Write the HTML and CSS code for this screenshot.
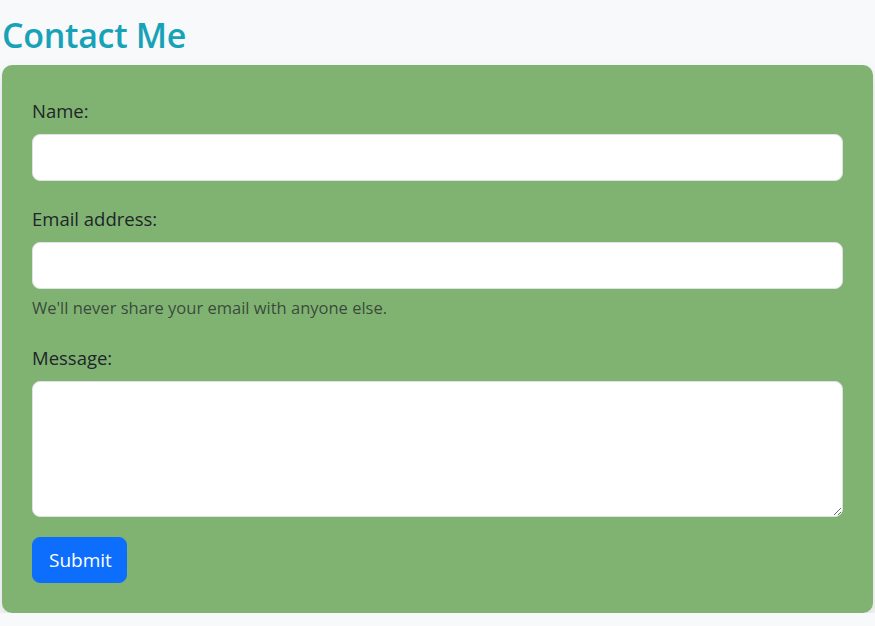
FILE: index.html
```html
<!DOCTYPE html>
<html lang="en">
<head>
<meta charset="utf-8">
<title>Contact Me</title>
<link rel="stylesheet" href="styles.css">
</head>
<body>
<main class="page">
  <h1 class="title">Contact Me</h1>
  <form class="card">
    <div class="field">
      <label class="label" for="name">Name:</label>
      <input class="control" type="text" id="name">
    </div>
    <div class="field">
      <label class="label" for="email">Email address:</label>
      <input class="control" type="email" id="email">
      <div class="help">We'll never share your email with anyone else.</div>
    </div>
    <div class="field">
      <label class="label" for="message">Message:</label>
      <textarea class="control area" id="message"></textarea>
    </div>
    <div class="actions">
      <button class="btn" type="button">Submit</button>
    </div>
  </form>
</main>
</body>
</html>
```

FILE: styles.css
```css
* { box-sizing: border-box; }
html, body { margin: 0; padding: 0; }
body {
  background: #f8f9fa;
  font-family: "Open Sans", "Noto Sans", sans-serif;
  color: #212529;
  font-size: 18px;
}
.page {
  padding: 14px 2px 0 2px;
}
.title {
  margin: 0 0 9px 0;
  font-size: 34px;
  line-height: 42px;
  font-weight: 600;
  color: #17a2b8;
  letter-spacing: -0.3px;
}
.card {
  display: flex;
  flex-direction: column;
  background: #80b372;
  border-radius: 10px;
  padding: 30px;
  box-shadow: 0 8px 16px rgba(0,0,0,0.12);
}
.field {
  display: flex;
  flex-direction: column;
  margin-bottom: 22px;
}
.label {
  font-size: 18.5px;
  line-height: 27px;
  padding-top: 2px;
  margin-bottom: 10px;
  color: #212529;
}
.control {
  display: block;
  width: 100%;
  height: 47px;
  border: 1px solid #dee2e6;
  border-radius: 8px;
  background: #fff;
  font-family: inherit;
  font-size: 18px;
  padding: 8px 16px;
  margin: 0;
}
.area {
  height: 136px;
  resize: vertical;
}
.help {
  margin-top: 7px;
  margin-bottom: 0;
  font-size: 16.5px;
  line-height: 24px;
  color: rgba(33,37,41,0.75);
}
.actions {
  display: flex;
  margin-top: -2px;
}
.btn {
  background: #0d6efd;
  color: #fff;
  border: 1px solid #0d6efd;
  border-radius: 8px;
  font-family: inherit;
  font-size: 19px;
  line-height: 28px;
  padding: 8px 16px;
  width: 95px;
  height: 46px;
  cursor: pointer;
}
```
